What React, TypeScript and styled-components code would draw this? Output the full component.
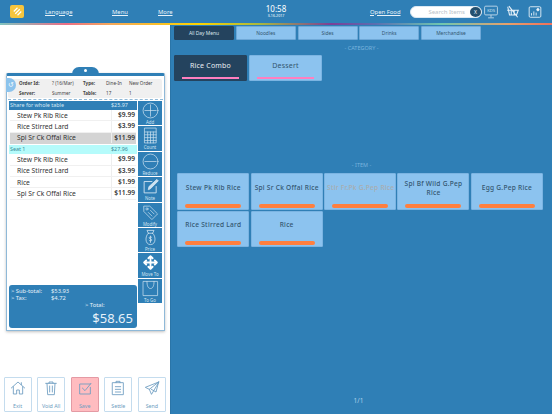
import React from 'react';
import styled, { createGlobalStyle } from 'styled-components';

const Global = createGlobalStyle`
  html, body { margin: 0; padding: 0; width: 552px; height: 414px; overflow: hidden; }
  body { font-family: "Noto Sans", "Open Sans", sans-serif; background: #fff; }
  * { box-sizing: border-box; }
`;

const Page = styled.div`
  width: 552px;
  height: 414px;
  display: flex;
  flex-direction: column;
  overflow: hidden;
`;

const Header = styled.header`
  height: 23px;
  background: #2f7fb6;
  display: flex;
  align-items: center;
  color: #fff;
  padding-left: 10px;
`;

const Logo = styled.div`
  width: 14px;
  height: 13px;
  border-radius: 2px;
  background: #f6c53d;
  display: flex;
  align-items: center;
  justify-content: center;
  margin-right: 21px;
`;

const NavLink = styled.a<{ $width: number }>`
  width: ${p => p.$width}px;
  font-size: 5.9px;
  text-decoration: underline;
  color: #e8f2f9;
  flex: none;
  white-space: nowrap;
`;

const Clock = styled.div`
  width: 48px;
  margin-left: 75px;
  margin-right: 70px;
  text-align: center;
  line-height: 1;
  font-size: 8px;
  & small { display: block; font-size: 3.6px; margin-top: 1px; }
`;

const SearchBox = styled.div`
  width: 72px;
  height: 12px;
  margin-left: 10px;
  background: #fff;
  border-radius: 6px;
  border: 1px solid #dbe8f2;
  color: #b9c2c9;
  font-size: 6px;
  display: flex;
  align-items: center;
  justify-content: flex-end;
  gap: 5px;
`;

const ClearDot = styled.span`
  width: 11px;
  height: 10px;
  border-radius: 50%;
  background: #24506f;
  color: #fff;
  font-size: 5px;
  display: flex;
  align-items: center;
  justify-content: center;
`;

const HeadIcons = styled.div`
  display: flex;
  align-items: center;
  gap: 8px;
  margin-left: 2px;
`;

const Rainbow = styled.div`
  height: 2px;
  background: linear-gradient(90deg, #7fc4c0 0%, #ec6f86 12%, #f4a85a 20%, #ffd400 36%, #a8b83f 47%, #7b3f98 60%, #5a6fb0 68%, #6fc6b0 80%, #e8a06a 92%, #f0705a 100%);
`;

const Body = styled.div`
  flex: 1;
  display: flex;
  min-height: 0;
`;

const LeftPane = styled.div`
  width: 170px;
  flex: none;
  display: flex;
  flex-direction: column;
  background: #fff;
  padding: 48px 4px 2px 6px;
`;

const OrderCard = styled.section`
  position: relative;
  width: 159px;
  height: 257.5px;
  flex: none;
  border: 1px solid #8fb9d8;
  border-top: 3px solid #2f7fb6;
  box-shadow: 0 1px 3px rgba(0, 0, 0, .25);
  border-radius: 2px 2px 0 0;
  padding: 2.5px 1px 1px 1px;
  display: flex;
  flex-direction: column;
  background: #fff;
`;

const Clip = styled.div`
  position: absolute;
  top: -9px;
  left: 65px;
  width: 27px;
  height: 6.5px;
  background: #2f7fb6;
  border-radius: 13px 13px 0 0;
  &::after {
    content: '';
    position: absolute;
    left: 12px;
    top: 2px;
    width: 3px;
    height: 3px;
    border-radius: 50%;
    background: #fff;
  }
`;

const SideDot = styled.div`
  position: absolute;
  left: -1px;
  top: 2px;
  width: 10px;
  height: 14px;
  border-radius: 0 7px 7px 0;
  background: #8cc3ec;
  color: #fff;
  font-size: 7px;
  line-height: 14px;
  text-align: center;
`;

const OrderInfo = styled.div`
  height: 19px;
  background: #f0f0f0;
  border-radius: 2px;
  margin: 0 1px 0 0;
  padding-left: 11px;
  display: grid;
  grid-template-columns: 33px 31px 23px 23px 1fr;
  align-items: center;
  font-size: 4.6px;
  color: #444;
  white-space: nowrap;
  & b { font-weight: 700; }
`;

const Dashed = styled.div`
  border-top: 1px dashed #8fb9d8;
  margin: 1px 0 1.5px;
`;

const OrderBody = styled.div`
  flex: 1;
  display: flex;
  min-height: 0;
  padding-left: 1px;
`;

const ListCol = styled.div`
  width: 128px;
  flex: none;
  display: flex;
  flex-direction: column;
`;

const Rows = styled.div`
  flex: 1;
`;

const GroupRow = styled.div<{ $seat?: boolean }>`
  height: 8.5px;
  margin-bottom: 0.5px;
  margin-top: ${p => (p.$seat ? 1 : 0)}px;
  padding-left: 1px;
  display: flex;
  justify-content: space-between;
  align-items: center;
  font-size: 5.4px;
  background: ${p => (p.$seat ? '#b5fbfb' : '#2f7fb6')};
  color: ${p => (p.$seat ? '#3b8a96' : '#d5e8f5')};
  & span:last-child { width: 26px; }
`;

const ItemRow = styled.div<{ $selected?: boolean }>`
  height: 11.4px;
  margin: 0 1px;
  display: flex;
  align-items: center;
  font-size: 6.7px;
  color: #333;
  background: ${p => (p.$selected ? '#d4d4d4' : '#fff')};
  border-bottom: 1px solid ${p => (p.$selected ? '#d4d4d4' : '#f0f0f0')};
`;

const ItemName = styled.span`
  flex: 1;
  padding-left: 7px;
  white-space: nowrap;
`;

const ItemPrice = styled.span`
  width: 25px;
  flex: none;
  text-align: right;
  padding-right: 1px;
  font-weight: 600;
  font-size: 6.6px;
  border-left: 1px solid #eee;
  white-space: nowrap;
  height: 100%;
  line-height: 10.4px;
`;

const TotalBox = styled.div`
  height: 42.5px;
  flex: none;
  background: #2f7fb6;
  border-radius: 3px;
  color: #e6f1f9;
  padding: 3px 4px 0 2px;
  display: flex;
  flex-direction: column;
  font-size: 5.8px;
  line-height: 6.5px;
  margin-bottom: 1px;
`;

const TotalLine = styled.div`
  display: flex;
  & span:first-child { width: 40px; }
`;

const TotalLabel = styled.div`
  margin: 1px 0 0 74px;
`;

const GrandTotal = styled.div`
  text-align: right;
  font-size: 13px;
  line-height: 17px;
  margin-top: 1px;
`;

const ToolCol = styled.div`
  flex: 1;
  padding-left: 1px;
  display: flex;
  flex-direction: column;
  gap: 1px;
`;

const ToolButton = styled.button`
  width: 24px;
  height: 24.4px;
  border: 0;
  padding: 1px 0 0;
  background: #2f7fb6;
  color: #cfe3f1;
  font: inherit;
  font-size: 4.4px;
  display: flex;
  flex-direction: column;
  align-items: center;
  justify-content: space-between;
  overflow: hidden;
  & svg { flex: none; }
  & span { line-height: 5.4px; }
`;

const BottomBar = styled.nav`
  margin-top: 46px;
  margin-left: -2.5px;
  display: flex;
  gap: 5.5px;
`;

const BottomButton = styled.button<{ $active?: boolean }>`
  width: 28.5px;
  height: 35.5px;
  padding: 2px 0 1px;
  background: ${p => (p.$active ? '#ffbcc0' : '#fff')};
  border: 1px solid ${p => (p.$active ? '#e49aa4' : '#c4dcee')};
  border-radius: 1px;
  color: #6d9cc0;
  font: inherit;
  font-size: 5.3px;
  white-space: nowrap;
  display: flex;
  flex-direction: column;
  align-items: center;
  justify-content: space-between;
`;

const RightPane = styled.main`
  flex: 1;
  background: #2f7fb6;
  border-left: 1px solid #2a75a8;
  padding: 1px 3px 0;
  display: flex;
  flex-direction: column;
`;

const Tabs = styled.div`
  display: flex;
  gap: 1.75px;
  height: 14px;
  margin-bottom: 4px;
`;

const Tab = styled.button<{ $active?: boolean }>`
  width: 60px;
  height: 14px;
  padding: 0;
  font: inherit;
  font-size: 4.9px;
  border: 1px solid ${p => (p.$active ? '#24435e' : '#6fa9d8')};
  border-radius: 1px;
  background: ${p => (p.$active ? '#24435e' : '#8cc3ef')};
  color: ${p => (p.$active ? '#dfe7ee' : '#33566f')};
`;

const SectionLabel = styled.div<{ $top?: number }>`
  height: 8px;
  line-height: 8px;
  margin-top: ${p => p.$top ?? 0}px;
  text-align: center;
  font-size: 5.5px;
  color: #79b4de;
`;

const Categories = styled.div`
  display: flex;
  gap: 2px;
  margin-top: 3px;
  height: 26px;
`;

const CategoryButton = styled.button<{ $active?: boolean }>`
  position: relative;
  width: 73px;
  height: 26px;
  padding: 0 0 5px;
  font: inherit;
  font-size: 7px;
  letter-spacing: .2px;
  border: 1px solid ${p => (p.$active ? '#24435e' : '#7bb4e2')};
  border-radius: 1px;
  background: ${p => (p.$active ? '#24435e' : '#8cc3ef')};
  color: ${p => (p.$active ? '#e8eef3' : '#33566f')};
  &::after {
    content: '';
    position: absolute;
    left: 7px;
    right: 7px;
    bottom: 1px;
    height: 2px;
    background: #ff7fbf;
  }
`;

const ItemGrid = styled.div`
  display: grid;
  grid-template-columns: repeat(5, 72px);
  grid-auto-rows: 36.5px;
  column-gap: 1.4px;
  row-gap: 0.8px;
  margin: 4.3px 0 0 3.3px;
`;

const MenuItem = styled.button<{ $dim?: boolean }>`
  position: relative;
  padding: 0 2px 8px;
  font: inherit;
  font-weight: 500;
  font-size: 6.6px;
  line-height: 9px;
  letter-spacing: .25px;
  border: 1px solid #7bb4e2;
  border-radius: 1px;
  background: #8cc3ef;
  color: ${p => (p.$dim ? '#a8adb0' : '#33566f')};
  white-space: ${p => (p.$dim ? 'nowrap' : 'normal')};
  overflow: hidden;
  &::after {
    content: '';
    position: absolute;
    left: 7px;
    right: 7px;
    bottom: 1px;
    height: 4px;
    border-radius: 2px;
    background: #ff7f3f;
  }
`;

const Pager = styled.div`
  margin-top: auto;
  height: 18px;
  padding-right: 6px;
  text-align: center;
  font-size: 6.5px;
  color: #a9cfea;
`;

const Ico = ({ size, children, color = 'currentColor', w = 1.5 }: { size: number; children: React.ReactNode; color?: string; w?: number }) => (
  <svg width={size} height={size} viewBox="0 0 24 24" fill="none" stroke={color} strokeWidth={w} strokeLinecap="round" strokeLinejoin="round">
    {children}
  </svg>
);

const orderA = [
  { name: 'Stew Pk Rib Rice', price: '$9.99' },
  { name: 'Rice Stirred Lard', price: '$3.99' },
  { name: 'Spi Sr Ck Offal Rice', price: '$11.99', selected: true },
];

const orderB = [
  { name: 'Stew Pk Rib Rice', price: '$9.99' },
  { name: 'Rice Stirred Lard', price: '$3.99' },
  { name: 'Rice', price: '$1.99' },
  { name: 'Spi Sr Ck Offal Rice', price: '$11.99' },
];

const tools: { label: string; icon: React.ReactNode }[] = [
  { label: 'Add', icon: <Ico size={17} w={1}><circle cx="12" cy="12" r="10.5" /><path d="M12 4v16M4 12h16" /></Ico> },
  { label: 'Count', icon: <Ico size={17} w={1}><rect x="4" y="1.5" width="16" height="21" /><path d="M4 7h16M4 11h16M4 15h16M4 19h16M8 7v15.5M12 7v15.5M16 7v15.5" /></Ico> },
  { label: 'Reduce', icon: <Ico size={17} w={1}><circle cx="12" cy="12" r="10.5" /><path d="M4 12h16" /></Ico> },
  { label: 'Note', icon: <Ico size={17} w={1.3}><path d="M20 12v9H3V5h11" /><path d="M9 16l1-4L21 2l2 2-11 11z" fill="currentColor" /></Ico> },
  { label: 'Modify', icon: <Ico size={17} w={1}><path d="M3 3h8l11 11-8 8L3 11z" /><circle cx="7" cy="7" r="1.5" /><path d="M9 12l5 5M12 9l5 5" /></Ico> },
  { label: 'Price', icon: <Ico size={17} w={1.1}><path d="M9 6L7 2h10l-2 4M9 6h6M9 6C4 10 4 22 12 22s8-12 3-16" /><path d="M14 12c-1-1.5-4-1-4 .5s4 1.5 4 3-3 2-4 .5M12 10v9" /></Ico> },
  { label: 'Move To', icon: <Ico size={17} color="#fff" w={2.6}><path d="M12 3v18M3 12h18M9 6l3-3 3 3M9 18l3 3 3-3M6 9l-3 3 3 3M18 9l3 3-3 3" /></Ico> },
  { label: 'To Go', icon: <Ico size={17} w={1}><rect x="2" y="2" width="20" height="20" /><path d="M7 2c0 7 2 10 5 10s5-3 5-10" /></Ico> },
];

const bottom: { label: string; active?: boolean; icon: React.ReactNode }[] = [
  { label: 'Exit', icon: <Ico size={16} w={1.3}><path d="M2 12L12 3l10 9M5 10v11h5v-6h4v6h5V10M17 4v3" /></Ico> },
  { label: 'Void All', icon: <Ico size={16} w={1.3}><path d="M4 5h16M9 5V3h6v2M6 5l1 17h10l1-17M10 9v9M14 9v9" /></Ico> },
  { label: 'Save', active: true, icon: <Ico size={16} w={1.3}><path d="M20 11v10H4V6h16M8 12l4 4 9-11" /></Ico> },
  { label: 'Settle', icon: <Ico size={16} w={1.3}><rect x="4" y="4" width="16" height="18" /><path d="M9 4V2h6v2M8 10h8M8 14h8M8 18h8" /></Ico> },
  { label: 'Send', icon: <Ico size={16} w={1.3}><path d="M22 3L2 11l6 3 3 7zM22 3L8 14M22 3l-4 15-7-4" /></Ico> },
];

export default function App() {
  return (
    <Page>
      <Global />
      <Header>
        <Logo>
          <svg width="9" height="9" viewBox="0 0 12 12" fill="none" stroke="#fff" strokeWidth="1.6">
            <path d="M1 6l5-5M3 9l6-6M6 11l5-5" />
          </svg>
        </Logo>
        <NavLink $width={67}>Language</NavLink>
        <NavLink $width={46}>Menu</NavLink>
        <NavLink $width={19}>More</NavLink>
        <Clock>
          10:58
          <small>3-16-2017</small>
        </Clock>
        <NavLink $width={30}>Open Food</NavLink>
        <SearchBox>
          Search Items
          <ClearDot>X</ClearDot>
        </SearchBox>
        <HeadIcons>
          <svg width="14" height="14" viewBox="0 0 24 24" fill="none" stroke="#dbeaf5" strokeWidth="1.3">
            <rect x="1" y="2" width="22" height="15" rx="2" />
            <path d="M12 17v4M7 22h10" />
            <text x="12" y="12.5" fontSize="7" fill="#dbeaf5" stroke="none" textAnchor="middle">KDS</text>
          </svg>
          <svg width="14" height="14" viewBox="0 0 24 24" fill="none" stroke="#e8f2f9" strokeWidth="1.8">
            <path d="M2 9h19l-3 8H6L3 3M7 21h.1M17 21h.1M5 2l15 19M9 9v8M14 9v8" />
          </svg>
          <svg width="14" height="14" viewBox="0 0 24 24" fill="none" stroke="#e8f2f9" strokeWidth="1.5">
            <rect x="2" y="3" width="20" height="18" rx="2" />
            <path d="M6 18v-4M10 18v-7M14 18v-5" />
            <circle cx="17" cy="8" r="2" fill="#e8f2f9" />
          </svg>
        </HeadIcons>
      </Header>
      <Rainbow />
      <Body>
        <LeftPane>
          <OrderCard>
            <Clip />
            <SideDot>↺</SideDot>
            <OrderInfo>
              <b>Order Id:</b><span>? (16/Mar)</span><b>Type:</b><span>Dine-In</span><span>New Order</span>
              <b>Server:</b><span>Summer</span><b>Table:</b><span>17</span><span>1</span>
            </OrderInfo>
            <Dashed />
            <OrderBody>
              <ListCol>
                <Rows>
                  <GroupRow><span>Share for whole table</span><span>$25.97</span></GroupRow>
                  {orderA.map(r => (
                    <ItemRow key={r.name} $selected={r.selected}>
                      <ItemName>{r.name}</ItemName>
                      <ItemPrice>{r.price}</ItemPrice>
                    </ItemRow>
                  ))}
                  <GroupRow $seat><span>Seat 1</span><span>$27.96</span></GroupRow>
                  {orderB.map(r => (
                    <ItemRow key={r.name}>
                      <ItemName>{r.name}</ItemName>
                      <ItemPrice>{r.price}</ItemPrice>
                    </ItemRow>
                  ))}
                </Rows>
                <TotalBox>
                  <TotalLine><span>&gt; Sub-total:</span><span>$53.93</span></TotalLine>
                  <TotalLine><span>&gt; Tax:</span><span>$4.72</span></TotalLine>
                  <TotalLabel>&gt; Total:</TotalLabel>
                  <GrandTotal>$58.65</GrandTotal>
                </TotalBox>
              </ListCol>
              <ToolCol>
                {tools.map(t => (
                  <ToolButton key={t.label}>
                    {t.icon}
                    <span>{t.label}</span>
                  </ToolButton>
                ))}
              </ToolCol>
            </OrderBody>
          </OrderCard>
          <BottomBar>
            {bottom.map(b => (
              <BottomButton key={b.label} $active={b.active}>
                {b.icon}
                <span>{b.label}</span>
              </BottomButton>
            ))}
          </BottomBar>
        </LeftPane>
        <RightPane>
          <Tabs>
            <Tab $active>All Day Menu</Tab>
            <Tab>Noodles</Tab>
            <Tab>Sides</Tab>
            <Tab>Drinks</Tab>
            <Tab>Merchandise</Tab>
          </Tabs>
          <SectionLabel>- CATEGORY -</SectionLabel>
          <Categories>
            <CategoryButton $active>Rice Combo</CategoryButton>
            <CategoryButton>Dessert</CategoryButton>
          </Categories>
          <SectionLabel $top={80}>- ITEM -</SectionLabel>
          <ItemGrid>
            <MenuItem>Stew Pk Rib Rice</MenuItem>
            <MenuItem>Spi Sr Ck Offal Rice</MenuItem>
            <MenuItem $dim>Stir Fr.Pk G.Pep Rice</MenuItem>
            <MenuItem>Spi Bf Wild G.Pep Rice</MenuItem>
            <MenuItem>Egg G.Pep Rice</MenuItem>
            <MenuItem>Rice Stirred Lard</MenuItem>
            <MenuItem>Rice</MenuItem>
          </ItemGrid>
          <Pager>1/1</Pager>
        </RightPane>
      </Body>
    </Page>
  );
}
